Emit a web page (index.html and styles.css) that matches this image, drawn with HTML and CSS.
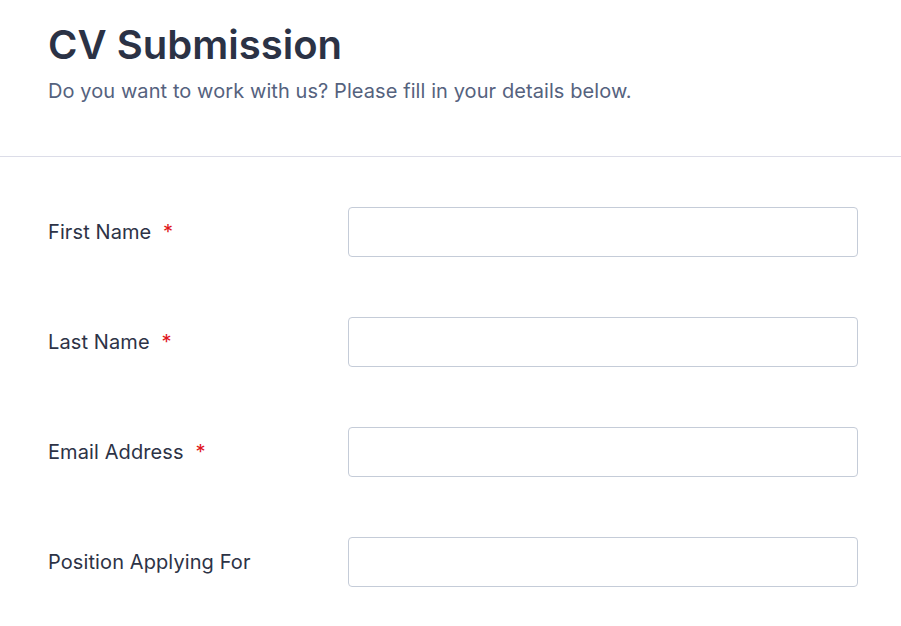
FILE: index.html
```html
<!DOCTYPE html>
<html>
<head>
<meta charset="utf-8">
<link rel="stylesheet" href="styles.css">
</head>
<body>
<header class="header">
  <h1 class="title">CV Submission</h1>
  <p class="subtitle">Do you want to work with us? Please fill in your details below.</p>
</header>
<form class="form">
  <div class="row">
    <label class="label">First Name <span class="req">*</span></label>
    <input class="input" type="text">
  </div>
  <div class="row">
    <label class="label">Last Name <span class="req">*</span></label>
    <input class="input" type="text">
  </div>
  <div class="row">
    <label class="label">Email Address <span class="req">*</span></label>
    <input class="input" type="text">
  </div>
  <div class="row">
    <label class="label">Position Applying For</label>
    <input class="input" type="text">
  </div>
</form>
</body>
</html>
```

FILE: styles.css
```css
html, body {
  margin: 0;
  padding: 0;
  background: #fff;
  font-family: Inter, "Noto Sans", sans-serif;
}
.header {
  padding: 21px 48px 0;
  height: 135px;
  border-bottom: 1px solid #dcdde8;
}
.title {
  margin: 0;
  font-size: 40px;
  font-weight: 600;
  line-height: 48px;
  color: #2b3245;
  letter-spacing: 0.01px;
}
.subtitle {
  margin: 8px 0 0;
  font-size: 20px;
  line-height: 28px;
  color: #55627e;
  letter-spacing: 0.08px;
}
.form {
  padding: 50px 43px 0 48px;
  display: flex;
  flex-direction: column;
  gap: 60px;
}
.row {
  display: flex;
  align-items: center;
}
.label {
  width: 300px;
  flex: none;
  font-size: 20px;
  color: #2d3346;
  letter-spacing: 0.1px;
}
.req {
  color: #e0161b;
  margin-left: 6px;
}
.input {
  width: 510px;
  height: 50px;
  box-sizing: border-box;
  border: 1px solid #c5ccd8;
  border-radius: 4px;
  background: #fff;
  margin: 0;
}
```
